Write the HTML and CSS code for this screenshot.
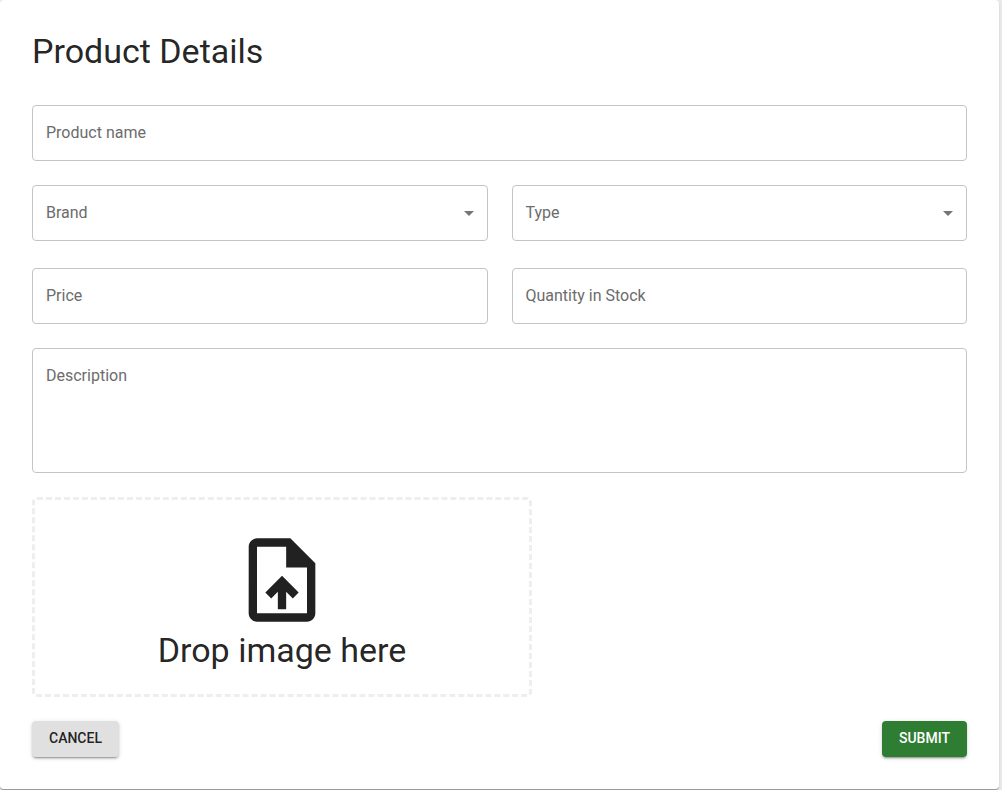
FILE: index.html
```html
<!DOCTYPE html>
<html lang="en">
<head>
<meta charset="utf-8">
<meta name="viewport" content="width=device-width, initial-scale=1">
<title>Product Details</title>
<link rel="stylesheet" href="styles.css">
</head>
<body>
<main class="card">
  <h1 class="title">Product Details</h1>
  <form class="form">
    <div class="field">
      <input class="control" id="name" type="text" placeholder=" ">
      <label class="label" for="name">Product name</label>
    </div>
    <div class="row row-selects">
      <div class="field">
        <select class="control" id="brand" required>
          <option value="" selected hidden></option>
        </select>
        <label class="label" for="brand">Brand</label>
        <svg class="arrow" viewBox="0 0 24 24" aria-hidden="true"><path d="M7 10l5 5 5-5z"/></svg>
      </div>
      <div class="field">
        <select class="control" id="type" required>
          <option value="" selected hidden></option>
        </select>
        <label class="label" for="type">Type</label>
        <svg class="arrow" viewBox="0 0 24 24" aria-hidden="true"><path d="M7 10l5 5 5-5z"/></svg>
      </div>
    </div>
    <div class="row">
      <div class="field">
        <input class="control" id="price" type="text" inputmode="decimal" placeholder=" ">
        <label class="label" for="price">Price</label>
      </div>
      <div class="field">
        <input class="control" id="stock" type="text" inputmode="numeric" placeholder=" ">
        <label class="label" for="stock">Quantity in Stock</label>
      </div>
    </div>
    <div class="field">
      <textarea class="control area" id="description" placeholder=" "></textarea>
      <label class="label" for="description">Description</label>
    </div>
    <label class="dropzone">
      <input class="file" type="file" accept="image/*">
      <svg class="upload" viewBox="0 0 24 24" aria-hidden="true"><path d="M14 2H6c-1.1 0-1.99.9-1.99 2L4 20c0 1.1.89 2 1.99 2H18c1.1 0 2-.9 2-2V8l-6-6zm4 18H6V4h7v5h5v11zM8 15.01l1.41 1.41L11 14.84V19h2v-4.16l1.59 1.59L16 15.01 12.01 11 8 15.01z"/></svg>
      <span class="drop-text">Drop image here</span>
    </label>
    <div class="actions">
      <button class="button cancel" type="button">CANCEL</button>
      <button class="button submit" type="submit">SUBMIT</button>
    </div>
  </form>
</main>
</body>
</html>
```
FILE: styles.css
```css
* {
  box-sizing: border-box;
}

body {
  margin: 0;
  background: #eaeaea;
  color: rgba(0, 0, 0, 0.87);
  font-family: Roboto, "Liberation Sans", sans-serif;
  font-size: 16px;
}

.card {
  margin-right: 3px;
  padding: 30px 32px 32px;
  border-bottom: 1px solid #999;
  border-radius: 4px;
  background: #fff;
  box-shadow: 0 1px 3px rgba(0, 0, 0, 0.12);
}

.title {
  margin: 0 0 33px;
  font-size: 34px;
  font-weight: 400;
  line-height: 42px;
}

.form {
  display: flex;
  flex-direction: column;
  gap: 24px;
}

.row {
  display: grid;
  grid-template-columns: 1fr 1fr;
  gap: 24px;
}

.row-selects {
  padding-bottom: 3px;
}

.field {
  display: grid;
  position: relative;
}

.control {
  width: 100%;
  height: 56px;
  padding: 16px 13px;
  border: 1px solid #c4c4c4;
  border-radius: 4px;
  background: transparent;
  color: inherit;
  font: inherit;
  line-height: 22px;
  appearance: none;
  outline: none;
}

.area {
  height: 125px;
  resize: none;
}

.control:hover {
  border-color: #212121;
}

.control:focus {
  border-color: #1976d2;
}

.label {
  position: absolute;
  top: 16px;
  left: 14px;
  color: #6c6c6c;
  line-height: 23px;
  pointer-events: none;
}

.control:focus + .label,
input:not(:placeholder-shown) + .label,
textarea:not(:placeholder-shown) + .label,
select:valid + .label {
  top: -12px;
  padding: 0 4px;
  background: #fff;
  font-size: 12px;
}

.arrow {
  position: absolute;
  top: 16px;
  right: 7px;
  width: 24px;
  height: 24px;
  fill: #757575;
  pointer-events: none;
}

.dropzone {
  display: flex;
  flex-direction: column;
  align-items: center;
  width: 500px;
  max-width: 100%;
  height: 200px;
  padding-top: 30px;
  border: 3px dashed #eee;
  border-radius: 5px;
  cursor: pointer;
}

.file {
  position: absolute;
  width: 1px;
  height: 1px;
  overflow: hidden;
  clip-path: inset(50%);
}

.upload {
  width: 100px;
  height: 100px;
  flex: none;
  fill: #212121;
}

.drop-text {
  font-size: 34px;
  line-height: 40px;
}

.actions {
  display: flex;
  justify-content: space-between;
}

.button {
  padding: 5px 17px 7px;
  border: 0;
  border-radius: 4px;
  font-family: inherit;
  font-size: 14px;
  font-weight: 500;
  line-height: 24px;
  box-shadow: 0 3px 1px -2px rgba(0, 0, 0, 0.2), 0 2px 2px rgba(0, 0, 0, 0.14), 0 1px 5px rgba(0, 0, 0, 0.12);
  cursor: pointer;
}

.cancel {
  background: #e0e0e0;
  color: rgba(0, 0, 0, 0.87);
}

.submit {
  background: #2e7d32;
  color: #fff;
}
```
